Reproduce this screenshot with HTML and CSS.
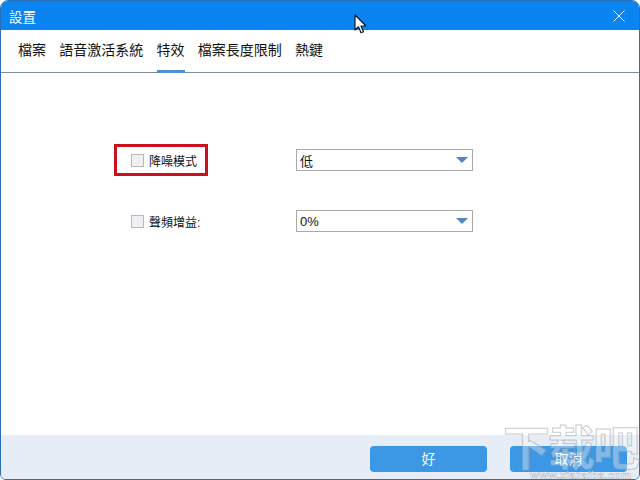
FILE: index.html
```html
<!DOCTYPE html>
<html lang="zh-Hant">
<head>
<meta charset="utf-8">
<title>設置</title>
<link rel="stylesheet" href="styles.css">
</head>
<body>
<div class="window">
  <header class="titlebar">
    <span class="title">設置</span>
    <svg class="close" width="12" height="12" viewBox="0 0 12 12"><path d="M.5.5l11 11M11.500.5l-11 11" stroke="#fff" stroke-width="1" fill="none"/></svg>
  </header>
  <nav class="tabs">
    <span class="tab">檔案</span>
    <span class="tab">語音激活系統</span>
    <span class="tab active">特效</span>
    <span class="tab">檔案長度限制</span>
    <span class="tab">熱鍵</span>
  </nav>
  <main class="content">
    <div class="row">
      <label class="option highlighted"><span class="check"></span><span>降噪模式</span></label>
      <div class="select"><span>低</span><span class="arrow"></span></div>
    </div>
    <div class="row">
      <label class="option"><span class="check"></span><span>聲頻增益:</span></label>
      <div class="select"><span>0%</span><span class="arrow"></span></div>
    </div>
  </main>
  <footer class="footer">
    <button class="btn">好</button>
    <button class="btn">取消</button>
  </footer>
</div>
<svg class="cursor" width="14" height="21" viewBox="0 0 14 21"><path d="M1 1v15l3.500-3.200 2.500 6 2.500-1-2.500-5.800h5z" fill="#fff" stroke="#0a1a2a" stroke-width="1.200" stroke-linejoin="round"/></svg>
<div class="watermark"><div class="wm-big">下载吧</div><div class="wm-url">www.xiazaiba.com</div></div>
</body>
</html>
```
FILE: styles.css
```css
* { box-sizing: border-box; }
html, body { margin: 0; padding: 0; width: 640px; height: 480px; overflow: hidden; background: #fff; }
body { font-family: "Liberation Sans", "Noto Sans CJK TC", sans-serif; color: #111; position: relative; }
.window { width: 640px; height: 480px; display: flex; flex-direction: column; border: 1px solid #2a6fb5; border-radius: 8px 8px 6px 6px; overflow: hidden; background: #fff; }
.titlebar { height: 29px; flex: none; background: #0984f0; color: #fff; display: flex; align-items: center; justify-content: space-between; padding: 0 14px 0 8px; }
.title { font-size: 13.500px; }
.tabs { height: 43px; flex: none; display: flex; gap: 13.250px; padding-left: 17px; border-bottom: 1px solid #7f8c9a; }
.tab { font-size: 14px; line-height: 41px; height: 43px; flex: none; }
.tab.active { border-bottom: 3px solid #4f8fd6; }
.content { flex: 1; padding: 71px 0 0 113px; display: flex; flex-direction: column; gap: 29px; }
.row { display: flex; align-items: center; height: 32px; }
.option { width: 182px; display: flex; align-items: center; gap: 5px; font-size: 12px; height: 32px; padding-left: 17px; }
.option.highlighted { width: 94px; margin-right: 88px; border: 3px solid #cc0f1c; padding-left: 14px; }
.check { width: 13px; height: 13px; border: 1px solid #b8b8b8; background: #eef0f4; flex: none; }
.select { width: 177px; height: 22px; border: 1px solid #a9a9a9; display: flex; align-items: center; justify-content: space-between; padding: 0 3px; font-size: 13px; }
.arrow { width: 0; height: 0; margin-right: 1px; border-left: 6.500px solid transparent; border-right: 6.500px solid transparent; border-top: 6px solid #4f86c6; }
.footer { height: 44px; flex: none; background: #e6edf7; display: flex; justify-content: flex-end; gap: 23px; padding: 11px 12px 0 0; }
.btn { width: 117px; height: 26px; border: 0; border-radius: 4px; background: #3c97e4; color: #fff; font: 14px/24px "Noto Sans CJK TC", sans-serif; padding: 0 0 2px; }
.cursor { position: absolute; left: 354px; top: 14px; }
.watermark { position: absolute; left: 503px; top: 420px; width: 137px; pointer-events: none; }
.wm-big { font: 700 47px/50px "Noto Sans CJK SC", sans-serif; letter-spacing: -2px; color: rgba(255,255,255,.35); -webkit-text-stroke: 1px rgba(150,160,170,.55); white-space: nowrap; }
.wm-url { font: 700 11.500px/8px "Liberation Sans", sans-serif; color: rgba(255,255,255,.5); -webkit-text-stroke: .5px rgba(130,140,150,.6); margin: 1px 0 0 27px; white-space: nowrap; }
```
